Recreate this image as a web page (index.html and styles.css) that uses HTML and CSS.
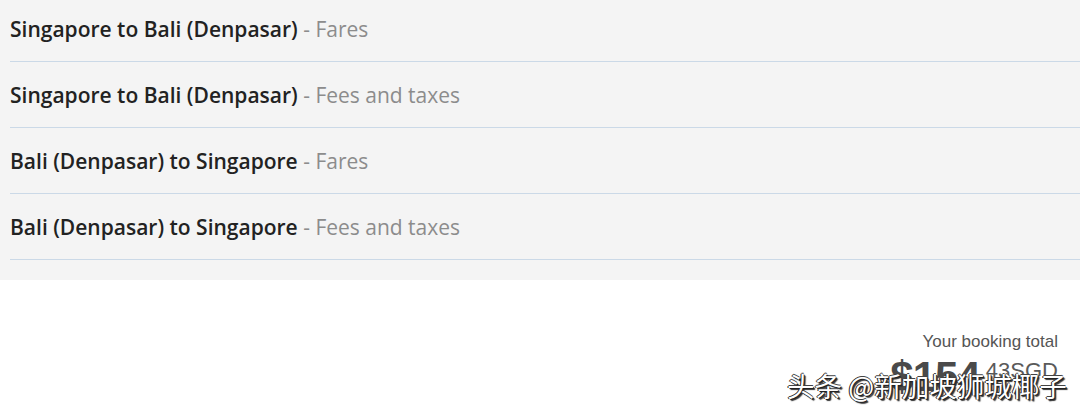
FILE: index.html
```html
<!DOCTYPE html>
<html>
<head>
<meta charset="utf-8">
<link rel="stylesheet" href="styles.css">
</head>
<body>
<div class="panel">
  <ul class="rows">
    <li class="row"><b class="route">Singapore to Bali (Denpasar)</b><span class="kind">&nbsp;- Fares</span></li>
    <li class="row"><b class="route">Singapore to Bali (Denpasar)</b><span class="kind">&nbsp;- Fees and taxes</span></li>
    <li class="row"><b class="route">Bali (Denpasar) to Singapore</b><span class="kind">&nbsp;- Fares</span></li>
    <li class="row"><b class="route">Bali (Denpasar) to Singapore</b><span class="kind">&nbsp;- Fees and taxes</span></li>
  </ul>
</div>
<div class="total">
  <div class="total-label">Your booking total</div>
  <div class="price"><span class="big">$154</span><span class="small">.43SGD</span></div>
</div>
<div class="watermark">头条 @新加坡狮城椰子</div>
</body>
</html>
```

FILE: styles.css
```css
html, body {
  margin: 0;
  padding: 0;
  background: #ffffff;
  overflow: hidden;
}
body {
  width: 1080px;
  height: 414px;
  position: relative;
  font-family: "Open Sans", sans-serif;
}
.panel {
  display: flow-root;
  background: #f4f4f4;
  padding: 0 0 19px 10px;
  height: 261px;
}
.rows {
  list-style: none;
  margin: -4px 0 0 0;
  padding: 0;
}
.row {
  height: 65px;
  border-bottom: 1px solid #cbd9e7;
  display: flex;
  align-items: center;
  font-size: 21px;
}
.route {
  font-weight: 600;
  color: #222222;
}
.kind {
  color: #8c8c8c;
  font-weight: 400;
}
.total {
  display: flex;
  flex-direction: column;
  align-items: flex-end;
  padding: 52px 22px 0 0;
}
.total-label {
  font-family: "Liberation Sans", Arial, sans-serif;
  font-size: 17px;
  color: #555555;
}
.price {
  font-family: "Liberation Sans", Arial, sans-serif;
  color: #4a4a4a;
  display: flex;
  align-items: flex-start;
}
.big {
  font-size: 42px;
  font-weight: 700;
  letter-spacing: -1px;
  line-height: 50px;
}
.small {
  font-size: 22px;
  margin-top: 6px;
  color: #5a5a5a;
}
.watermark {
  position: absolute;
  left: 787px;
  top: 365px;
  font-family: "Noto Sans CJK SC", sans-serif;
  font-size: 27.5px;
  color: #ffffff;
  text-shadow: 1px 1px 0 #222, -1px 0 0 #222, 0 -1px 0 #444, 2px 2px 1px #333;
}
```
